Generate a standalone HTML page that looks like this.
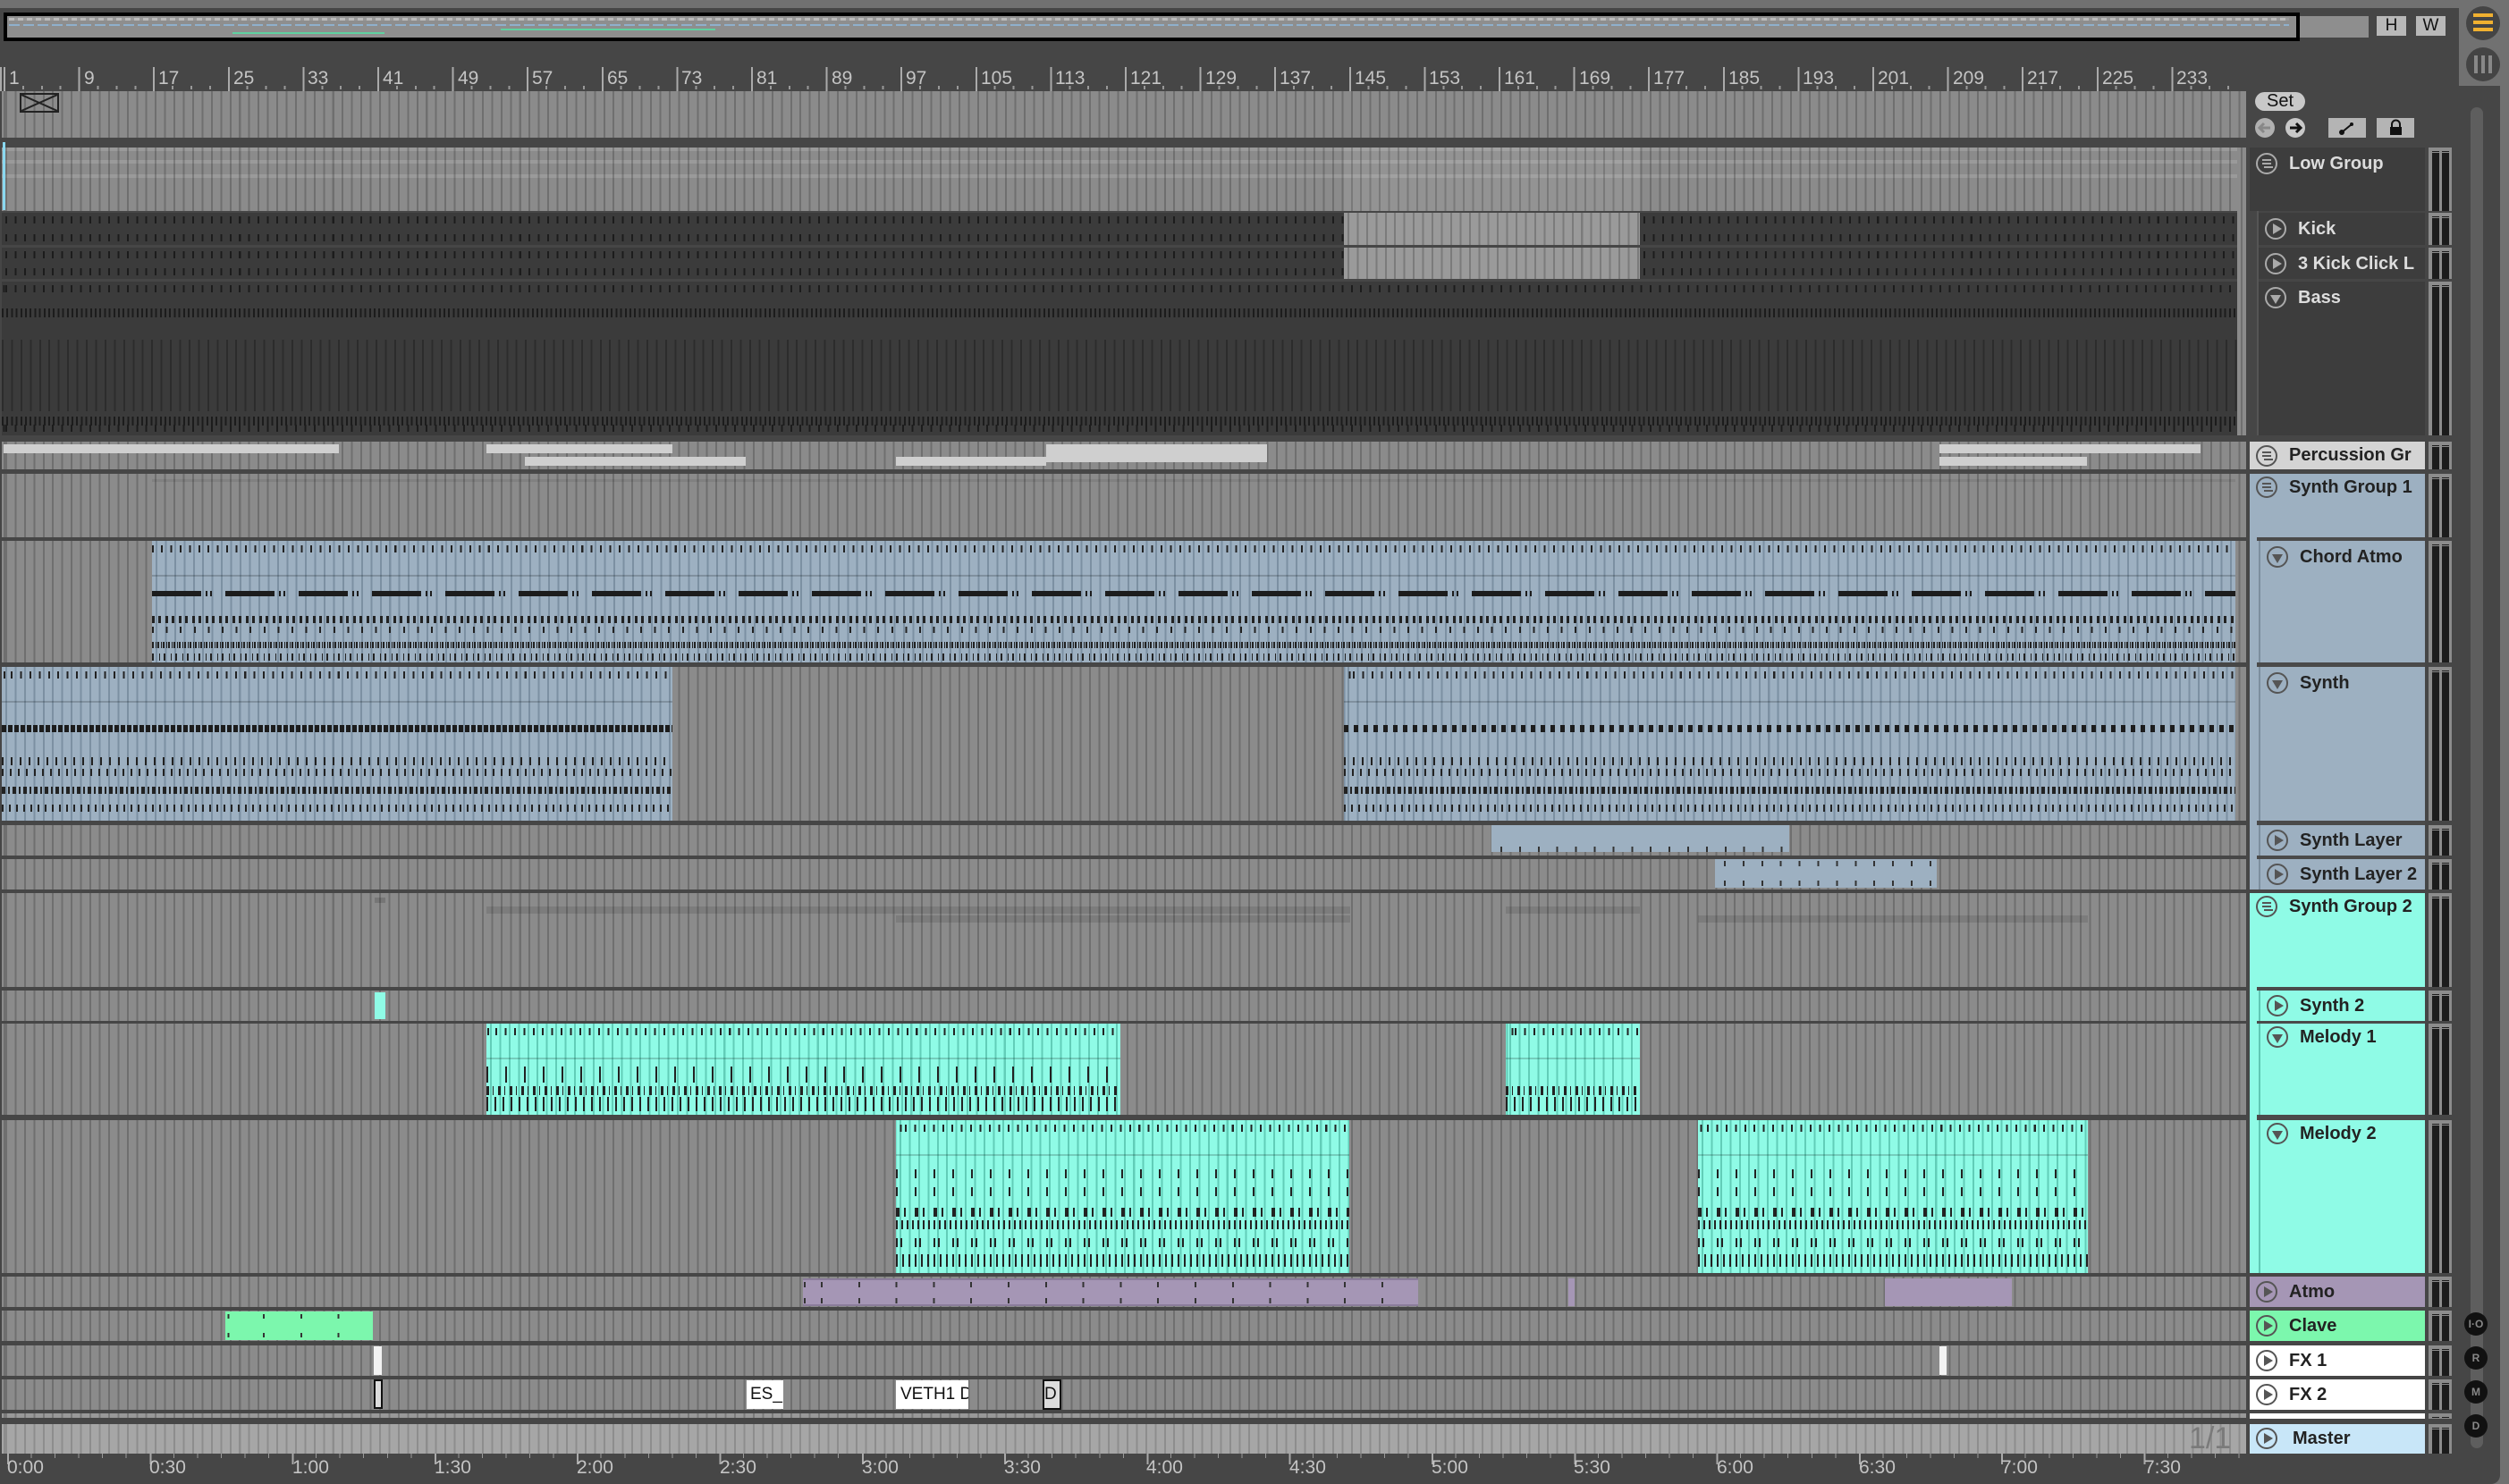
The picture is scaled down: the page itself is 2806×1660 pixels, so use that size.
<!DOCTYPE html>
<html><head><meta charset="utf-8"><style>
*{margin:0;padding:0;box-sizing:border-box}
body{width:2806px;height:1660px;background:#464646;position:relative;overflow:hidden;font-family:"Liberation Sans",sans-serif}
.a{position:absolute}
.g{background-color:#8b8b8b;background-image:repeating-linear-gradient(90deg,rgba(0,0,0,.2) 0 2px,transparent 2px 10.45px);background-position:4px 0}
.dk{background-color:#3b3b3b;background-image:repeating-linear-gradient(90deg,#1c1c1c 0 2px,transparent 2px 10.45px),repeating-linear-gradient(90deg,#1c1c1c 0 2px,transparent 2px 10.45px);background-size:100% 8px,100% 8px;background-position:4px 4px,4px calc(100% - 4px);background-repeat:repeat-x}
.rl{font-family:"Liberation Sans Narrow","Liberation Sans",sans-serif;color:#c4c4c4;font-size:21px}
.hd{position:absolute;left:2516px;width:196px;font-weight:bold;font-size:20px;line-height:36px;color:#222}
.hd span{position:absolute;left:44px;top:0;white-space:nowrap}
.hd i{position:absolute;left:7px;top:6px;width:24px;height:24px;border:2px solid #555;border-radius:50%}
.hd i.p:after{content:"";position:absolute;left:7px;top:4px;border-left:10px solid #555;border-top:6px solid transparent;border-bottom:6px solid transparent}
.hd i.d:after{content:"";position:absolute;left:4px;top:7px;border-top:10px solid #555;border-left:6px solid transparent;border-right:6px solid transparent}
.hd i.gr:after{content:"";position:absolute;left:5px;top:5px;width:10px;height:2px;background:#555;box-shadow:0 4px 0 #555,2px 8px 0 #555}
.lt i{border-color:#aaa}
.lt i.p:after{border-left-color:#aaa}.lt i.d:after{border-top-color:#aaa}.lt i.gr:after{background:#aaa;box-shadow:0 4px 0 #aaa,2px 8px 0 #aaa}
.ch{left:2526px;width:186px}
.m{position:absolute;left:2716px;width:26px;background:#8c8c8c}
.m:before,.m:after{content:"";position:absolute;top:3px;bottom:0;width:8px;background:#1c1c1c;border-top:3px double #8c8c8c}
.m:before{left:4px}.m:after{left:15px}
.bl{background-color:#9db0c1;background-image:repeating-linear-gradient(90deg,#7c90a2 0 2px,transparent 2px 10.45px);background-position:4px 0}
.aq{background-color:#8ffbe6;background-image:repeating-linear-gradient(90deg,#62cdb8 0 2px,transparent 2px 10.45px);background-position:4px 0}
.ck{position:absolute;left:0;right:0;top:0;height:40px;border-bottom:2px solid rgba(0,0,0,.18);background-image:repeating-linear-gradient(90deg,#222 0 2px,transparent 2px 10.45px);background-size:100% 8px;background-position:10px 5px;background-repeat:repeat-x}
.nt{position:absolute;left:0;right:0;height:6px}
.circ{position:absolute;width:26px;height:26px;border-radius:50%;background:#111;color:#888;font-size:12px;font-weight:bold;text-align:center;line-height:26px}
</style></head><body>
<div class="a" style="left:0;top:0;width:2806px;height:9px;background:#717171"></div>
<div class="a" style="left:2750px;top:0;width:56px;height:1660px;background:#717171"></div>
<div class="a" style="left:2700px;top:96px;width:96px;height:1564px;background:#464646;border-radius:0 0 10px 0"></div>
<div class="a" style="left:2763px;top:120px;width:14px;height:1500px;background:#5e5e5e;border-radius:7px"></div>
<div class="a" style="left:2758px;top:7px;width:38px;height:38px;border-radius:50%;background:#444"></div>
<div class="a" style="left:2766px;top:15px;width:22px;height:4px;background:#f0b030;box-shadow:0 8px 0 #f0b030,0 16px 0 #f0b030"></div>
<div class="a" style="left:2758px;top:53px;width:38px;height:38px;border-radius:50%;background:#444"></div>
<div class="a" style="left:2767px;top:62px;width:4px;height:20px;background:#888;box-shadow:8px 0 0 #888,16px 0 0 #888"></div>
<div class="a" style="left:4px;top:14px;width:2568px;height:32px;border:4px solid #000;background:#8e8e8e"></div>
<div class="a" style="left:10px;top:20px;width:2550px;height:3px;background:repeating-linear-gradient(90deg,#bbb 0 6px,#999 6px 10px)"></div>
<div class="a" style="left:10px;top:27px;width:2550px;height:2px;background:repeating-linear-gradient(90deg,#8fb0cc 0 12px,transparent 12px 16px)"></div>
<div class="a" style="left:260px;top:36px;width:170px;height:2px;background:#5fd0a0"></div>
<div class="a" style="left:560px;top:32px;width:240px;height:2px;background:#5fd0a0"></div>
<div class="a" style="left:2572px;top:18px;width:77px;height:24px;background:#8e8e8e"></div>
<div class="a" style="left:2658px;top:18px;width:33px;height:22px;background:#b8b8b8;font-size:19px;text-align:center;line-height:22px;color:#111">H</div>
<div class="a" style="left:2702px;top:18px;width:33px;height:22px;background:#b8b8b8;font-size:19px;text-align:center;line-height:22px;color:#111">W</div>
<div class="a" style="left:0;top:75px;width:2512px;height:27px;background-image:repeating-linear-gradient(90deg,#aaa 0 2px,transparent 2px 83.6px),repeating-linear-gradient(90deg,#999 0 2px,transparent 2px 20.9px);background-size:100% 27px,100% 4px;background-position:4px 0,4px 21px;background-repeat:repeat-x"></div>
<div class="a rl" style="left:0;top:76px;width:2512px;height:26px">
<span class="a" style="left:10px">1</span><span class="a" style="left:94px">9</span><span class="a" style="left:177px">17</span><span class="a" style="left:261px">25</span><span class="a" style="left:344px">33</span><span class="a" style="left:428px">41</span><span class="a" style="left:512px">49</span><span class="a" style="left:595px">57</span><span class="a" style="left:679px">65</span><span class="a" style="left:762px">73</span><span class="a" style="left:846px">81</span><span class="a" style="left:930px">89</span><span class="a" style="left:1013px">97</span><span class="a" style="left:1097px">105</span><span class="a" style="left:1180px">113</span><span class="a" style="left:1264px">121</span><span class="a" style="left:1348px">129</span><span class="a" style="left:1431px">137</span><span class="a" style="left:1515px">145</span><span class="a" style="left:1598px">153</span><span class="a" style="left:1682px">161</span><span class="a" style="left:1766px">169</span><span class="a" style="left:1849px">177</span><span class="a" style="left:1933px">185</span><span class="a" style="left:2016px">193</span><span class="a" style="left:2100px">201</span><span class="a" style="left:2184px">209</span><span class="a" style="left:2267px">217</span><span class="a" style="left:2351px">225</span><span class="a" style="left:2434px">233</span></div>
<div class="a g" style="left:2px;top:102px;width:2510px;height:52px"></div>
<div class="a" style="left:22px;top:104px;width:44px;height:22px;border:2px solid #222"><svg width="40" height="18" style="position:absolute;left:0;top:0"><path d="M0 0L20 9L40 0M0 18L20 9L40 18" stroke="#222" stroke-width="2" fill="none"/></svg></div>
<div class="a" style="left:2522px;top:103px;width:56px;height:21px;border-radius:11px;background:#c8c8c8;font-size:20px;text-align:center;line-height:21px;color:#111">Set</div>
<svg class="a" style="left:2522px;top:132px" width="60" height="24"><circle cx="11" cy="11" r="11" fill="#b0b0b0"/><path d="M17 11H6M10 6L5 11L10 16" stroke="#888" stroke-width="3" fill="none"/><circle cx="45" cy="11" r="11" fill="#c8c8c8"/><path d="M39 11H50M46 6L51 11L46 16" stroke="#111" stroke-width="3" fill="none"/></svg>
<div class="a" style="left:2604px;top:132px;width:42px;height:22px;background:#b4b4b4"><svg width="42" height="22"><path d="M15 16L26 7" stroke="#111" stroke-width="2"/><circle cx="15" cy="16" r="3" fill="#111"/><circle cx="26" cy="7" r="2" fill="#111"/></svg></div>
<div class="a" style="left:2658px;top:132px;width:42px;height:22px;background:#b4b4b4"><svg width="42" height="22"><rect x="15" y="10" width="13" height="9" fill="#111"/><path d="M17 10V7a4.5 4.5 0 0 1 9 0v3" stroke="#111" stroke-width="2" fill="none"/></svg></div>

<div class="a g" style="left:2px;top:165px;width:2510px;height:71px;background-image:repeating-linear-gradient(90deg,rgba(0,0,0,.2) 0 2px,transparent 2px 10.45px),linear-gradient(#9a9a9a 0 4px,transparent 4px 14px,#9a9a9a 14px 18px,transparent 18px 30px,#9a9a9a 30px 34px,transparent 34px)"></div>
<div class="a" style="left:1503px;top:165px;width:331px;height:71px;background:rgba(255,255,255,.07)"></div>
<div class="a dk" style="left:2px;top:238px;width:1501px;height:36px"></div>
<div class="a g" style="left:1503px;top:238px;width:331px;height:36px;background-color:#9a9a9a"></div>
<div class="a dk" style="left:1834px;top:238px;width:668px;height:36px"></div>
<div class="a dk" style="left:2px;top:277px;width:1501px;height:35px"></div>
<div class="a g" style="left:1503px;top:277px;width:331px;height:35px;background-color:#9a9a9a"></div>
<div class="a dk" style="left:1834px;top:277px;width:668px;height:35px"></div>
<div class="a dk" style="left:2px;top:315px;width:2500px;height:172px"></div>
<div class="a" style="left:2px;top:345px;width:2500px;height:10px;background:repeating-linear-gradient(90deg,#1c1c1c 0 2px,transparent 2px 5.2px)"></div>
<div class="a" style="left:2px;top:466px;width:2500px;height:10px;background:repeating-linear-gradient(90deg,#1c1c1c 0 2px,transparent 2px 5.2px)"></div>
<div class="a" style="left:2px;top:380px;width:2500px;height:80px;background:repeating-linear-gradient(90deg,rgba(0,0,0,.25) 0 2px,transparent 2px 10.45px)"></div>
<div class="a g" style="left:2502px;top:165px;width:10px;height:322px"></div>
<div class="a g" style="left:2px;top:494px;width:2510px;height:31px"></div>
<div class="a" style="left:4px;top:497px;width:375px;height:10px;background:#cfcfcf"></div>
<div class="a" style="left:544px;top:497px;width:208px;height:10px;background:#cfcfcf"></div>
<div class="a" style="left:587px;top:511px;width:247px;height:10px;background:#cfcfcf"></div>
<div class="a" style="left:1002px;top:511px;width:168px;height:10px;background:#cfcfcf"></div>
<div class="a" style="left:1170px;top:497px;width:247px;height:20px;background:#cfcfcf"></div>
<div class="a" style="left:2169px;top:497px;width:292px;height:10px;background:#cfcfcf"></div>
<div class="a" style="left:2169px;top:511px;width:165px;height:10px;background:#cfcfcf"></div>
<div class="a g" style="left:2px;top:530px;width:2510px;height:71px"></div>
<div class="a" style="left:170px;top:536px;width:2330px;height:3px;background:rgba(0,0,0,.08)"></div>
<div class="a g" style="left:2px;top:605px;width:2510px;height:136px"></div>
<div class="a bl" style="left:170px;top:605px;width:2330px;height:136px"><div class="ck"></div>
<div class="nt" style="top:56px;height:6px;background:repeating-linear-gradient(90deg,#1c1c1c 0 55px,transparent 55px 60px,#1c1c1c 60px 62px,transparent 62px 65px,#1c1c1c 65px 67px,transparent 67px 82px)"></div>
<div class="nt" style="top:84px;height:8px;background:repeating-linear-gradient(90deg,#222 0 3px,transparent 3px 7px,#222 7px 10px,transparent 10px 15px)"></div>
<div class="nt" style="top:96px;height:7px;background:repeating-linear-gradient(90deg,#222 0 2px,transparent 2px 15.6px)"></div>
<div class="nt" style="top:113px;height:7px;background:repeating-linear-gradient(90deg,#222 0 2px,transparent 2px 4px,#222 4px 5px,transparent 5px 6px)"></div>
<div class="nt" style="top:126px;height:8px;background:repeating-linear-gradient(90deg,#222 0 2px,transparent 2px 8px,#222 8px 9px,transparent 9px 13px)"></div></div>
<div class="a g" style="left:2px;top:746px;width:2510px;height:172px"></div>
<div class="a bl" style="left:2px;top:746px;width:750px;height:172px"><div class="ck"></div>
<div class="nt" style="top:65px;height:8px;background:repeating-linear-gradient(90deg,#1c1c1c 0 5px,transparent 5px 7px)"></div>
<div class="nt" style="top:101px;height:9px;background:repeating-linear-gradient(90deg,#222 0 2px,transparent 2px 10px)"></div>
<div class="nt" style="top:114px;height:8px;background:repeating-linear-gradient(90deg,#222 0 2px,transparent 2px 9px)"></div>
<div class="nt" style="top:134px;height:8px;background:repeating-linear-gradient(90deg,#222 0 4px,transparent 4px 7px,#222 7px 9px,transparent 9px 12px)"></div>
<div class="nt" style="top:154px;height:8px;background:repeating-linear-gradient(90deg,#222 0 2px,transparent 2px 8px)"></div></div>
<div class="a bl" style="left:1503px;top:746px;width:997px;height:172px"><div class="ck"></div>
<div class="nt" style="top:65px;height:8px;background:repeating-linear-gradient(90deg,#1c1c1c 0 5px,transparent 5px 11px)"></div>
<div class="nt" style="top:101px;height:9px;background:repeating-linear-gradient(90deg,#222 0 2px,transparent 2px 10px)"></div>
<div class="nt" style="top:114px;height:8px;background:repeating-linear-gradient(90deg,#222 0 2px,transparent 2px 9px)"></div>
<div class="nt" style="top:134px;height:8px;background:repeating-linear-gradient(90deg,#222 0 4px,transparent 4px 7px,#222 7px 9px,transparent 9px 12px)"></div>
<div class="nt" style="top:154px;height:8px;background:repeating-linear-gradient(90deg,#222 0 2px,transparent 2px 8px)"></div></div>
<div class="a g" style="left:2px;top:923px;width:2510px;height:34px"></div>
<div class="a bl" style="left:1668px;top:923px;width:333px;height:30px;background-image:repeating-linear-gradient(90deg,#333 0 2px,transparent 2px 20.9px);background-size:100% 6px;background-position:10px 24px;background-repeat:repeat-x"></div>
<div class="a g" style="left:2px;top:961px;width:2510px;height:34px"></div>
<div class="a bl" style="left:1918px;top:961px;width:248px;height:32px;background-image:repeating-linear-gradient(90deg,#333 0 2px,transparent 2px 20.9px),repeating-linear-gradient(90deg,#333 0 2px,transparent 2px 20.9px);background-size:100% 6px,100% 6px;background-position:10px 2px,10px 24px;background-repeat:repeat-x"></div>
<div class="a g" style="left:2px;top:999px;width:2510px;height:105px"></div>
<div class="a" style="left:544px;top:1014px;width:966px;height:8px;background:rgba(0,0,0,.1)"></div>
<div class="a" style="left:1002px;top:1024px;width:508px;height:8px;background:rgba(0,0,0,.1)"></div>
<div class="a" style="left:1684px;top:1014px;width:150px;height:8px;background:rgba(0,0,0,.1)"></div>
<div class="a" style="left:1899px;top:1024px;width:436px;height:8px;background:rgba(0,0,0,.1)"></div>
<div class="a" style="left:419px;top:1004px;width:12px;height:6px;background:rgba(0,0,0,.15)"></div>
<div class="a g" style="left:2px;top:1108px;width:2510px;height:34px"></div>
<div class="a" style="left:419px;top:1110px;width:12px;height:30px;background:#8ffbe6"></div>
<div class="a g" style="left:2px;top:1145px;width:2510px;height:102px"></div>
<div class="a aq" style="left:544px;top:1145px;width:709px;height:102px"><div class="ck"></div>
<div class="nt" style="top:48px;height:18px;background:repeating-linear-gradient(90deg,#222 0 2px,transparent 2px 21px)"></div>
<div class="nt" style="top:70px;height:10px;background:repeating-linear-gradient(90deg,#222 0 3px,transparent 3px 7px,#222 7px 8px,transparent 8px 13px)"></div>
<div class="nt" style="top:82px;height:16px;background:repeating-linear-gradient(90deg,#222 0 2px,transparent 2px 9px)"></div></div>
<div class="a aq" style="left:1684px;top:1145px;width:150px;height:102px"><div class="ck"></div>
<div class="nt" style="top:70px;height:10px;background:repeating-linear-gradient(90deg,#222 0 3px,transparent 3px 7px,#222 7px 8px,transparent 8px 13px)"></div>
<div class="nt" style="top:82px;height:16px;background:repeating-linear-gradient(90deg,#222 0 2px,transparent 2px 9px)"></div></div>
<div class="a g" style="left:2px;top:1253px;width:2510px;height:171px"></div>
<div class="a aq" style="left:1002px;top:1253px;width:507px;height:171px"><div class="ck"></div>
<div class="nt" style="top:55px;height:10px;background:repeating-linear-gradient(90deg,#222 0 2px,transparent 2px 21px)"></div>
<div class="nt" style="top:75px;height:10px;background:repeating-linear-gradient(90deg,#222 0 2px,transparent 2px 21px)"></div>
<div class="nt" style="top:98px;height:10px;background:repeating-linear-gradient(90deg,#222 0 4px,transparent 4px 9px,#222 9px 11px,transparent 11px 21px)"></div>
<div class="nt" style="top:112px;height:10px;background:repeating-linear-gradient(90deg,#222 0 2px,transparent 2px 6px)"></div>
<div class="nt" style="top:132px;height:10px;background:repeating-linear-gradient(90deg,#222 0 2px,transparent 2px 5px,#222 5px 7px,transparent 7px 21px)"></div>
<div class="nt" style="top:150px;height:14px;background:repeating-linear-gradient(90deg,#222 0 2px,transparent 2px 7px)"></div></div>
<div class="a aq" style="left:1899px;top:1253px;width:436px;height:171px"><div class="ck"></div>
<div class="nt" style="top:55px;height:10px;background:repeating-linear-gradient(90deg,#222 0 2px,transparent 2px 21px)"></div>
<div class="nt" style="top:75px;height:10px;background:repeating-linear-gradient(90deg,#222 0 2px,transparent 2px 21px)"></div>
<div class="nt" style="top:98px;height:10px;background:repeating-linear-gradient(90deg,#222 0 4px,transparent 4px 9px,#222 9px 11px,transparent 11px 21px)"></div>
<div class="nt" style="top:112px;height:10px;background:repeating-linear-gradient(90deg,#222 0 2px,transparent 2px 6px)"></div>
<div class="nt" style="top:132px;height:10px;background:repeating-linear-gradient(90deg,#222 0 2px,transparent 2px 5px,#222 5px 7px,transparent 7px 21px)"></div>
<div class="nt" style="top:150px;height:14px;background:repeating-linear-gradient(90deg,#222 0 2px,transparent 2px 7px)"></div></div>
<div class="a g" style="left:2px;top:1428px;width:2510px;height:34px"></div>
<div class="a" style="left:898px;top:1430px;width:688px;height:31px;background-color:#a596b5;border-top:2px solid #8a7c9a;border-bottom:2px solid #8a7c9a;background-image:repeating-linear-gradient(90deg,#333 0 2px,transparent 2px 41.8px),repeating-linear-gradient(90deg,#333 0 2px,transparent 2px 41.8px);background-size:100% 6px,100% 6px;background-position:20px 2px,20px 20px;background-repeat:repeat-x"></div>
<div class="a" style="left:1754px;top:1430px;width:7px;height:31px;background:#a596b5"></div>
<div class="a" style="left:2108px;top:1430px;width:142px;height:31px;background:#a596b5"></div>
<div class="a g" style="left:2px;top:1466px;width:2510px;height:34px"></div>
<div class="a" style="left:252px;top:1467px;width:165px;height:32px;background-color:#7cf7ad;background-image:repeating-linear-gradient(90deg,#333 0 2px,transparent 2px 41.8px),repeating-linear-gradient(90deg,#333 0 2px,transparent 2px 41.8px);background-size:100% 5px,100% 5px;background-position:42px 3px,42px 24px;background-repeat:repeat-x"></div>
<div class="a g" style="left:2px;top:1505px;width:2510px;height:34px"></div>
<div class="a" style="left:418px;top:1506px;width:9px;height:32px;background:#f2f2f2"></div>
<div class="a" style="left:2169px;top:1506px;width:8px;height:32px;background:#f2f2f2"></div>
<div class="a g" style="left:2px;top:1543px;width:2510px;height:34px"></div>
<div class="a" style="left:418px;top:1543px;width:10px;height:33px;border:2px solid #111;background:#ddd"></div>
<div class="a" style="left:835px;top:1544px;width:41px;height:32px;background:#fff;font-family:'Liberation Sans Narrow','Liberation Sans',sans-serif;font-size:19px;line-height:32px;padding-left:4px;color:#111">ES_</div>
<div class="a" style="left:1002px;top:1544px;width:81px;height:32px;background:#fff;font-family:'Liberation Sans Narrow','Liberation Sans',sans-serif;font-size:19px;line-height:32px;padding-left:5px;color:#111;overflow:hidden;white-space:nowrap">VETH1 D</div>
<div class="a" style="left:1166px;top:1543px;width:21px;height:34px;border:2px solid #111;background:#ddd;font-family:'Liberation Sans Narrow','Liberation Sans',sans-serif;font-size:19px;line-height:30px;color:#111;overflow:hidden">D</div>
<div class="a g" style="left:2px;top:1581px;width:2510px;height:5px;background-color:#999"></div>
<div class="a" style="left:2px;top:1593px;width:2510px;height:33px;background-color:#a6a6a6;background-image:repeating-linear-gradient(90deg,rgba(0,0,0,.15) 0 2px,transparent 2px 10.45px);background-position:4px 0"></div>
<div class="a" style="left:2448px;top:1590px;font-size:34px;color:#7a7a7a;font-family:'Liberation Sans Narrow','Liberation Sans',sans-serif">1/1</div>
<div class="a" style="left:0;top:1626px;width:2512px;height:12px;background-image:repeating-linear-gradient(90deg,#aaa 0 2px,transparent 2px 159.3px),repeating-linear-gradient(90deg,#999 0 1px,transparent 1px 26.55px);background-size:100% 12px,100% 5px;background-position:8px 0,8px 0;background-repeat:repeat-x"></div>
<div class="a rl" style="left:0;top:1630px;width:2512px;height:28px">
<span class="a" style="left:8px">0:00</span><span class="a" style="left:167px">0:30</span><span class="a" style="left:327px">1:00</span><span class="a" style="left:486px">1:30</span><span class="a" style="left:645px">2:00</span><span class="a" style="left:805px">2:30</span><span class="a" style="left:964px">3:00</span><span class="a" style="left:1123px">3:30</span><span class="a" style="left:1282px">4:00</span><span class="a" style="left:1442px">4:30</span><span class="a" style="left:1601px">5:00</span><span class="a" style="left:1760px">5:30</span><span class="a" style="left:1920px">6:00</span><span class="a" style="left:2079px">6:30</span><span class="a" style="left:2238px">7:00</span><span class="a" style="left:2398px">7:30</span></div>
<div class="a" style="left:3px;top:159px;width:3px;height:76px;background:#8ad8f0"></div>

<!-- headers -->
<div class="hd lt" style="top:165px;height:71px;background:#3d3d3d;color:#ddd"><i class="gr"></i><span>Low Group</span></div>
<div class="a" style="left:2524px;top:236px;width:2px;height:251px;background:#555"></div>
<div class="hd ch lt" style="top:238px;height:36px;background:#3d3d3d;color:#ddd"><i class="p"></i><span>Kick</span></div>
<div class="hd ch lt" style="top:277px;height:35px;background:#3d3d3d;color:#ddd"><i class="p"></i><span>3 Kick Click L</span></div>
<div class="hd ch lt" style="top:315px;height:172px;background:#3d3d3d;color:#ddd"><i class="d"></i><span>Bass</span></div>
<div class="hd" style="top:494px;height:31px;background:#d4d4d4;line-height:31px"><i class="gr" style="top:4px"></i><span>Percussion Gr</span></div>
<div class="hd" style="top:530px;height:71px;background:#9db0c1"><i class="gr" style="top:3px"></i><span style="line-height:30px">Synth Group 1</span></div>
<div class="hd" style="top:601px;height:394px;background:#9db0c1"></div>
<div class="hd ch" style="top:605px;height:136px;background:#9db0c1;border-left:2px solid #7c8e9e"><i class="d"></i><span>Chord Atmo</span></div>
<div class="hd ch" style="top:746px;height:172px;background:#9db0c1;border-left:2px solid #7c8e9e"><i class="d"></i><span>Synth</span></div>
<div class="hd ch" style="top:923px;height:34px;background:#9db0c1;border-left:2px solid #7c8e9e;line-height:34px"><i class="p" style="top:5px"></i><span>Synth Layer</span></div>
<div class="hd ch" style="top:961px;height:34px;background:#9db0c1;border-left:2px solid #7c8e9e;line-height:34px"><i class="p" style="top:5px"></i><span>Synth Layer 2</span></div>
<div class="hd" style="top:999px;height:425px;background:#8ffbe6"><i class="gr" style="top:3px"></i><span style="line-height:30px">Synth Group 2</span></div>
<div class="hd ch" style="top:1108px;height:34px;background:#8ffbe6;border-left:2px solid #5fc7b4;line-height:34px"><i class="p" style="top:5px"></i><span>Synth 2</span></div>
<div class="hd ch" style="top:1145px;height:102px;background:#8ffbe6;border-left:2px solid #5fc7b4;line-height:30px"><i class="d" style="top:3px"></i><span>Melody 1</span></div>
<div class="hd ch" style="top:1253px;height:171px;background:#8ffbe6;border-left:2px solid #5fc7b4;line-height:30px"><i class="d" style="top:3px"></i><span>Melody 2</span></div>
<div class="a" style="left:2516px;top:1104px;width:196px;height:4px;background:#4a4a4a"></div>
<div class="a" style="left:2516px;top:1142px;width:196px;height:3px;background:#4a4a4a"></div>
<div class="a" style="left:2516px;top:1247px;width:196px;height:6px;background:#4a4a4a"></div>
<div class="a" style="left:2516px;top:741px;width:196px;height:5px;background:#4a4a4a"></div>
<div class="a" style="left:2516px;top:918px;width:196px;height:5px;background:#4a4a4a"></div>
<div class="a" style="left:2516px;top:957px;width:196px;height:4px;background:#4a4a4a"></div>
<div class="a" style="left:2516px;top:601px;width:196px;height:4px;background:#4a4a4a"></div>
<div class="a" style="left:2516px;top:601px;width:8px;height:394px;background:#9db0c1"></div>
<div class="a" style="left:2516px;top:1104px;width:8px;height:320px;background:#8ffbe6"></div>
<div class="hd" style="top:1428px;height:34px;background:#a596b5;line-height:34px"><i class="p" style="top:5px"></i><span>Atmo</span></div>
<div class="hd" style="top:1466px;height:34px;background:#7cf7ad;line-height:34px"><i class="p" style="top:5px"></i><span>Clave</span></div>
<div class="hd" style="top:1505px;height:34px;background:#fff;line-height:34px"><i class="p" style="top:5px"></i><span>FX 1</span></div>
<div class="hd" style="top:1543px;height:34px;background:#fff;line-height:34px"><i class="p" style="top:5px"></i><span>FX 2</span></div>
<div class="hd" style="top:1581px;height:6px;background:#fff"></div>
<div class="hd" style="top:1593px;height:33px;background:#c8e6f8;line-height:33px"><i class="p" style="top:4px"></i><span style="left:48px">Master</span></div>
<div class="m" style="top:165px;height:71px"></div><div class="m" style="top:238px;height:36px"></div><div class="m" style="top:277px;height:35px"></div><div class="m" style="top:315px;height:172px"></div><div class="m" style="top:494px;height:31px"></div><div class="m" style="top:530px;height:71px"></div><div class="m" style="top:605px;height:136px"></div><div class="m" style="top:746px;height:172px"></div><div class="m" style="top:923px;height:34px"></div><div class="m" style="top:961px;height:34px"></div><div class="m" style="top:999px;height:105px"></div><div class="m" style="top:1108px;height:34px"></div><div class="m" style="top:1145px;height:102px"></div><div class="m" style="top:1253px;height:171px"></div><div class="m" style="top:1428px;height:34px"></div><div class="m" style="top:1466px;height:34px"></div><div class="m" style="top:1505px;height:34px"></div><div class="m" style="top:1543px;height:34px"></div><div class="m" style="top:1581px;height:6px"></div><div class="m" style="top:1593px;height:33px"></div>
<div class="circ" style="left:2756px;top:1468px">I·O</div>
<div class="circ" style="left:2756px;top:1506px">R</div>
<div class="circ" style="left:2756px;top:1544px">M</div>
<div class="circ" style="left:2756px;top:1582px">D</div>
</body></html>
